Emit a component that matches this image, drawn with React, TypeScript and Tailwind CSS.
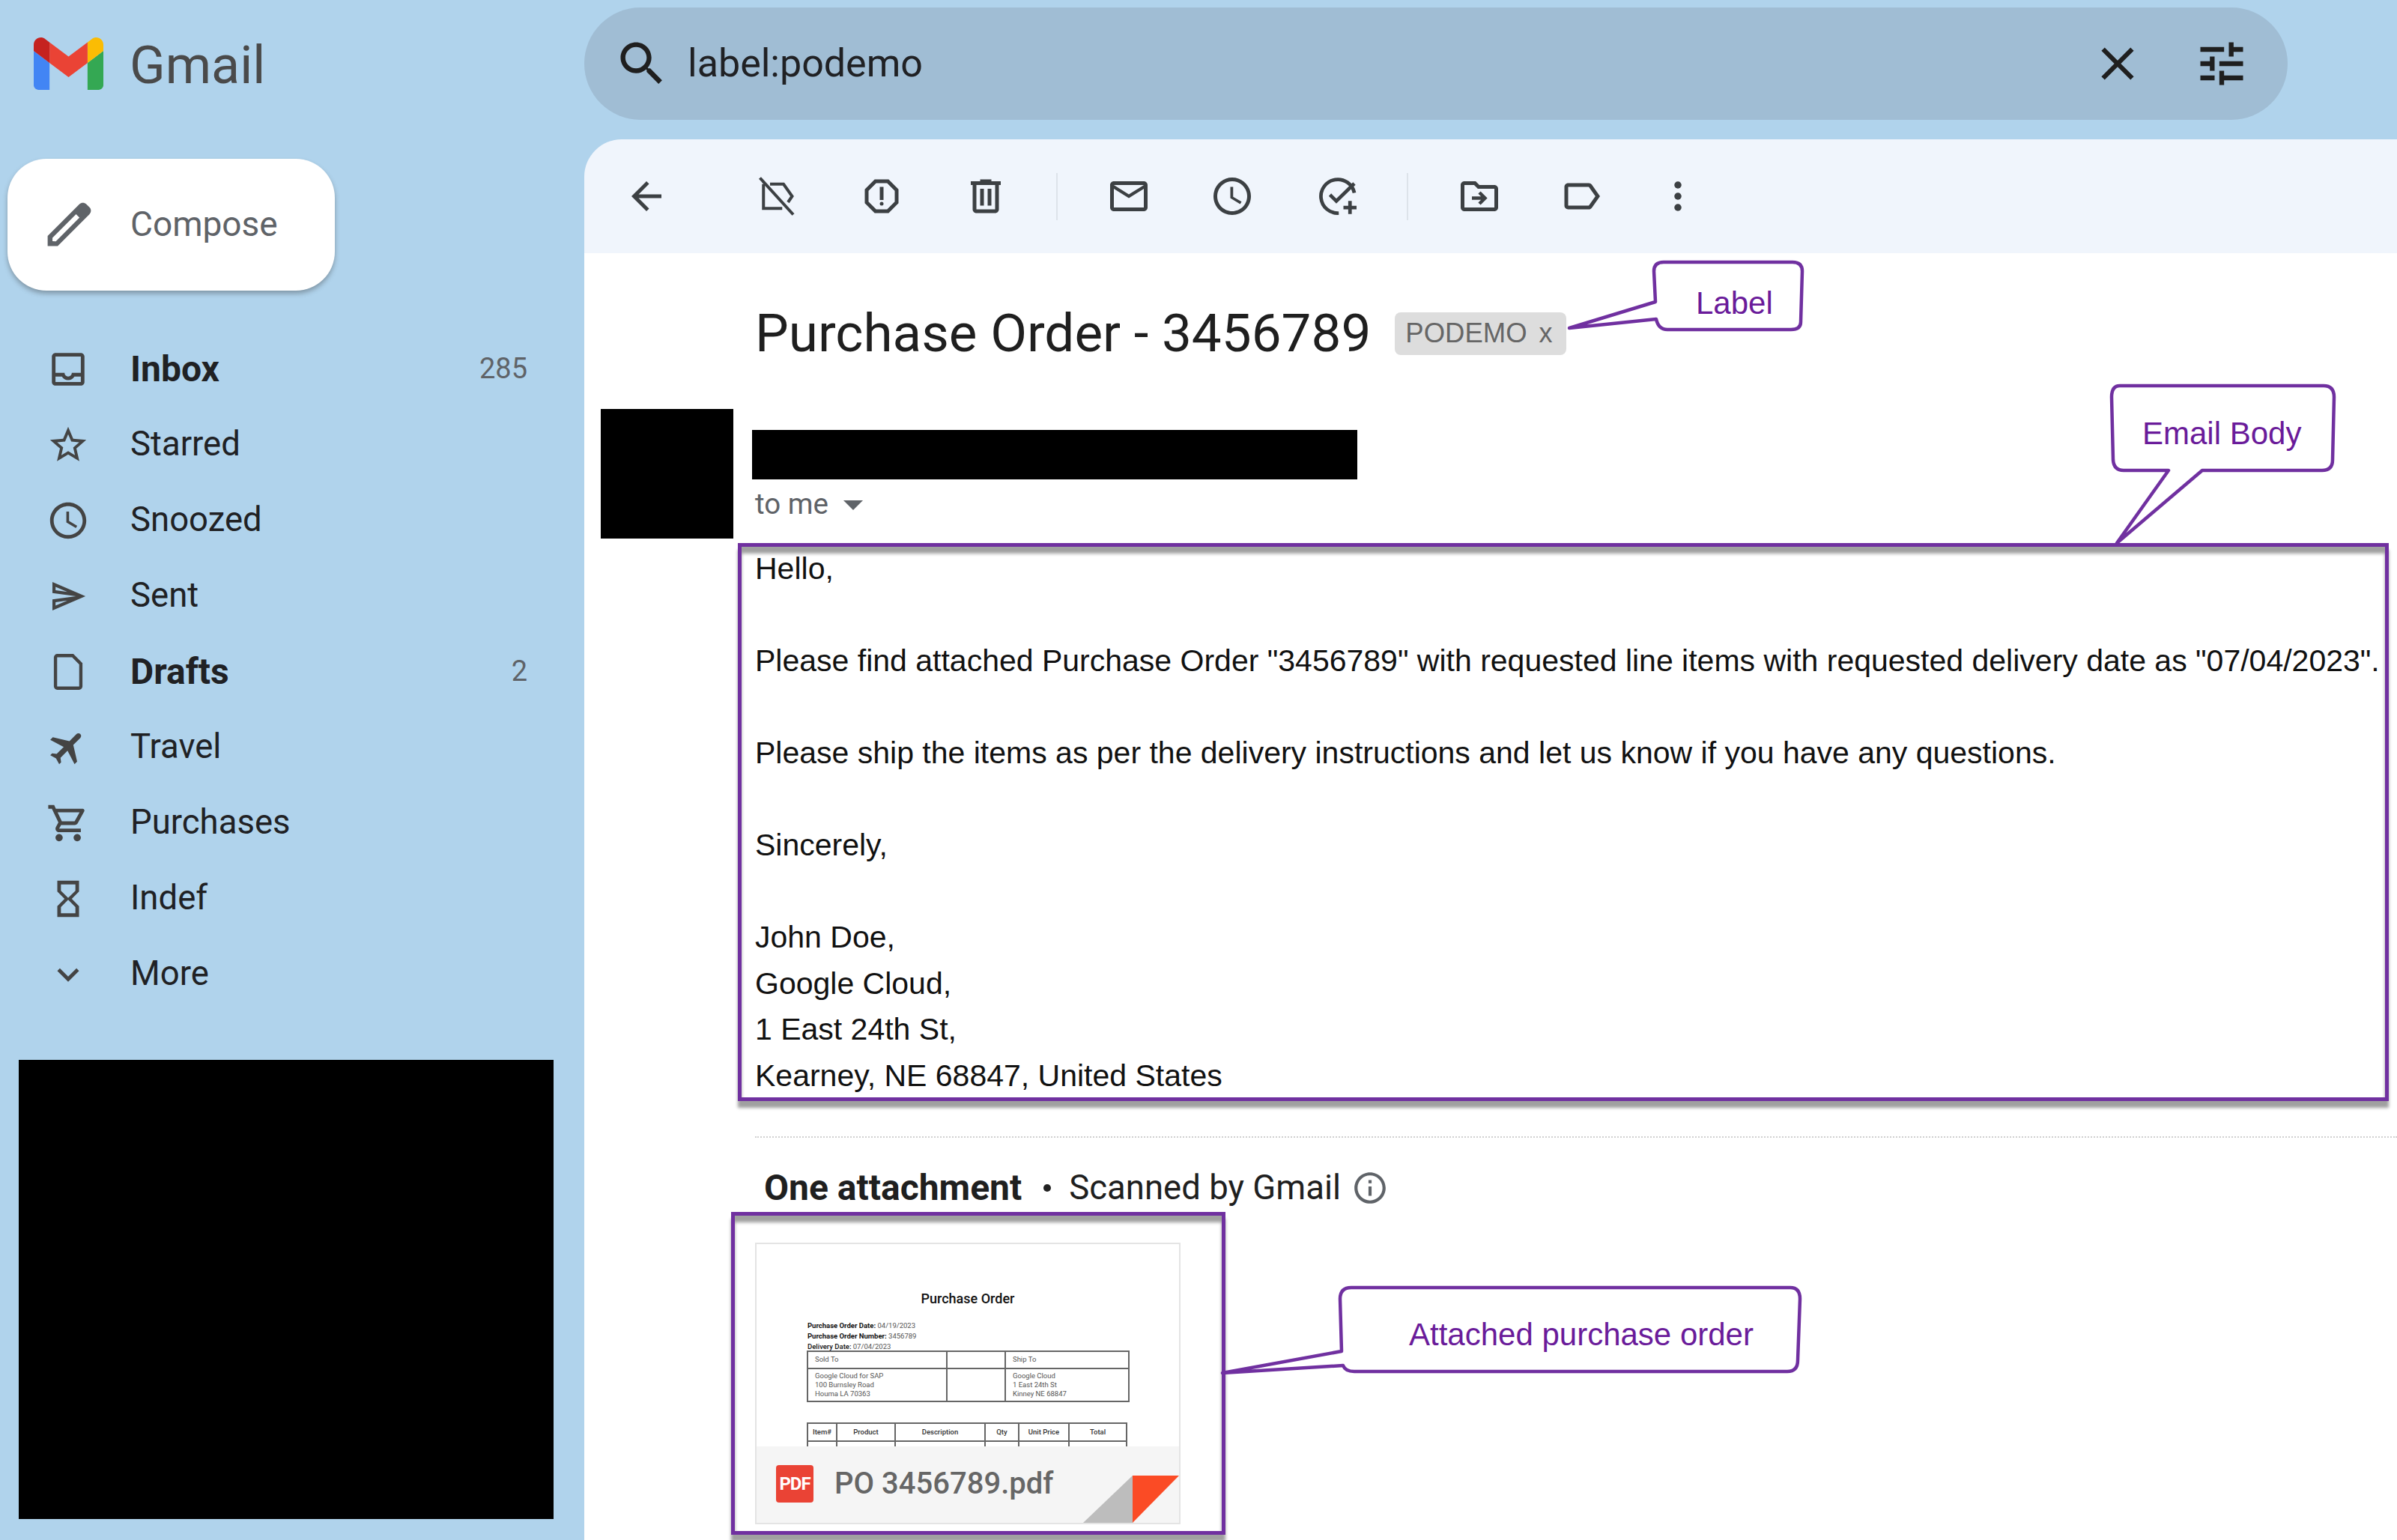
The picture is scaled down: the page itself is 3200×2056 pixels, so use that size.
import type { ReactNode } from "react";

const roboto = "font-['Roboto',sans-serif]";
const arial = "font-['Liberation_Sans',Arial,sans-serif]";

function Icon({ size = 60, className = "", children }: { size?: number; className?: string; children: ReactNode }) {
  return (
    <svg width={size} height={size} viewBox="0 0 24 24" fill="currentColor" className={`shrink-0 ${className}`}>
      {children}
    </svg>
  );
}

const navItems: { label: string; count?: string; bold?: boolean; icon: ReactNode }[] = [
  {
    label: "Inbox",
    count: "285",
    bold: true,
    icon: <path d="M19 3H5c-1.1 0-2 .9-2 2v14c0 1.1.9 2 2 2h14c1.1 0 2-.9 2-2V5c0-1.1-.9-2-2-2zm0 16H5v-3h3.56c.69 1.19 1.97 2 3.44 2s2.75-.81 3.44-2H19v3zm0-5h-4.99c0 1.1-.9 2-2 2s-2-.9-2-2H5V5h14v9z" />,
  },
  {
    label: "Starred",
    icon: <path d="M22 9.24l-7.19-.62L12 2 9.19 8.63 2 9.24l5.46 4.73L5.82 21 12 17.27 18.18 21l-1.63-7.03L22 9.24zM12 15.4l-3.76 2.27 1-4.28-3.32-2.88 4.38-.38L12 6.1l1.71 4.04 4.38.38-3.32 2.88 1 4.28L12 15.4z" />,
  },
  {
    label: "Snoozed",
    icon: (
      <path d="M11.99 2C6.47 2 2 6.48 2 12s4.47 10 9.99 10C17.52 22 22 17.52 22 12S17.52 2 11.99 2zM12 20c-4.42 0-8-3.58-8-8s3.58-8 8-8 8 3.58 8 8-3.58 8-8 8zM12.5 7H11v6l5.25 3.15.75-1.23-4.5-2.67z" />
    ),
  },
  {
    label: "Sent",
    icon: <path transform="translate(12 12) scale(0.87) translate(-12 -12)" d="M4.01 6.03l7.51 3.22-7.52-1 .01-2.22m7.5 8.72L4 17.97v-2.22l7.51-1M2.01 3L2 10l15 2-15 2 .01 7L23 12 2.01 3z" />,
  },
  {
    label: "Drafts",
    count: "2",
    bold: true,
    icon: <path d="M14.5 3H6a1 1 0 0 0-1 1v16a1 1 0 0 0 1 1h12a1 1 0 0 0 1-1V7.5z" fill="none" stroke="currentColor" strokeWidth="1.8" />,
  },
  {
    label: "Travel",
    icon: (
      <path
        transform="rotate(45 12 12)"
        d="M21 16v-2l-8-5V3.5c0-.83-.67-1.5-1.5-1.5S10 2.67 10 3.5V9l-8 5v2l8-2.5V19l-2 1.5V22l3.5-1 3.5 1v-1.5L13 19v-5.5l8 2.5z"
      />
    ),
  },
  {
    label: "Purchases",
    icon: <path d="M15.55 13c.75 0 1.41-.41 1.75-1.03l3.58-6.49c.37-.66-.11-1.48-.87-1.48H5.21l-.94-2H1v2h2l3.6 7.59-1.35 2.44C4.52 15.37 5.48 17 7 17h12v-2H7l1.1-2h7.45zM6.16 6h12.15l-2.76 5H8.53L6.16 6zM7 18c-1.1 0-1.99.9-1.99 2S5.9 22 7 22s2-.9 2-2-.9-2-2-2zm10 0c-1.1 0-1.99.9-1.99 2s.89 2 1.99 2 2-.9 2-2-.9-2-2-2z" />,
  },
  {
    label: "Indef",
    icon: <path d="M6 2v6h.01L6 8.01 10 12l-4 4 .01.01H6V22h12v-5.99h-.01L18 16l-4-4 4-3.99-.01-.01H18V2H6zm10 14.5V20H8v-3.5l4-4 4 4zm-4-5l-4-4V4h8v3.5l-4 4z" />,
  },
  {
    label: "More",
    icon: <path d="M16.59 8.59L12 13.17 7.41 8.59 6 10l6 6 6-6z" />,
  },
];

function Sidebar() {
  return (
    <aside className="w-[780px] shrink-0 flex flex-col">
      <div className="h-[212px] pl-[45px] pt-[50px] flex items-start gap-[35px]">
        <svg width="93" height="70" viewBox="52 42 88 66" className="shrink-0">
          <path fill="#4285f4" d="M58 108h14V74L52 59v43c0 3.32 2.69 6 6 6" />
          <path fill="#34a853" d="M120 108h14c3.32 0 6-2.69 6-6V59l-20 15" />
          <path fill="#fbbc04" d="M120 48v26l20-15v-8c0-7.42-8.47-11.65-14.4-7.2" />
          <path fill="#ea4335" d="M72 74V48l24 18 24-18v26L96 92" />
          <path fill="#c5221f" d="M52 51v8l20 15V48l-5.6-4.2c-5.94-4.45-14.4-.22-14.4 7.2" />
        </svg>
        <span className={`${roboto} text-[70px] leading-[74px] text-[#4a4a4a]`}>Gmail</span>
      </div>

      <button className="ml-[10px] w-[437px] h-[176px] shrink-0 bg-white rounded-[52px] shadow-[0_4px_6px_rgba(60,64,67,0.4)] flex items-center pl-[44px] gap-[43px] pb-[2px]">
        <Icon size={77} className="text-[#5f6368]">
          <path d="M20.41 4.94l-1.35-1.35c-.78-.78-2.05-.78-2.83 0L3 16.82V21h4.18L20.41 7.77c.79-.78.79-2.05 0-2.83zm-14 14.12L5 19v-1.36l9.82-9.82 1.41 1.41-9.82 9.83z" />
        </Icon>
        <span className={`${roboto} text-[46px] text-[#5f6368]`}>Compose</span>
      </button>

      <nav className="mt-[54px] flex flex-col">
        {navItems.map((item) => (
          <div key={item.label} className="h-[101px] flex items-center pl-[62px] pr-[76px] text-[#3c4043]">
            <Icon size={58} className="text-[#444]">
              {item.icon}
            </Icon>
            <span className={`${roboto} ml-[54px] text-[#202124] ${item.bold ? "text-[48px] font-bold" : "text-[45.5px]"}`}>{item.label}</span>
            {item.count && <span className={`${roboto} ml-auto text-[38px] text-[#5f6368]`}>{item.count}</span>}
          </div>
        ))}
      </nav>

      <div className="mt-[64px] ml-[25px] w-[714px] h-[613px] bg-black" />
    </aside>
  );
}

function SearchBar() {
  return (
    <div className="mt-[10px] h-[150px] w-[2274px] shrink-0 rounded-full bg-[#a0bdd4] flex items-center pl-[39px] text-[#1f1f1f]">
      <Icon size={76}>
        <path d="M15.5 14h-.79l-.28-.27C15.41 12.59 16 11.11 16 9.5 16 5.91 13.09 3 9.5 3S3 5.91 3 9.5 5.91 16 9.5 16c1.61 0 3.09-.59 4.23-1.57l.27.28v.79l5 4.99L20.49 19l-4.99-5zm-6 0C7.01 14 5 11.99 5 9.5S7.01 5 9.5 5 14 7.01 14 9.5 11.99 14 9.5 14z" />
      </Icon>
      <span className={`${roboto} ml-[23px] text-[52px] text-[#202124]`}>label:podemo</span>
      <Icon size={74} className="ml-auto">
        <path d="M19 6.41L17.59 5 12 10.59 6.41 5 5 6.41 10.59 12 5 17.59 6.41 19 12 13.41 17.59 19 19 17.59 13.41 12z" />
      </Icon>
      <Icon size={76} className="ml-[64px] mr-[50px]">
        <path d="M3 17v2h6v-2H3zM3 5v2h10V5H3zm10 16v-2h8v-2h-8v-2h-2v6h2zM7 9v2H3v2h4v2h2V9H7zm14 4v-2H11v2h10zm-6-4h2V7h4V5h-4V3h-2v6z" />
      </Icon>
    </div>
  );
}

function Toolbar() {
  return (
    <div className="h-[152px] shrink-0 bg-[#f0f5fc] flex items-center pl-[53px] text-[#3c4043]">
      <Icon>
        <path d="M20 11H7.83l5.59-5.59L12 4l-8 8 8 8 1.41-1.41L7.83 13H20v-2z" />
      </Icon>
      <Icon className="ml-[115px]">
        <path d="M8 5.5h7.2l4.6 6.5-2.2 3.2M14.5 18.5H4.5V5.5" fill="none" stroke="currentColor" strokeWidth="1.6" />
        <path d="M2.6 2.2 20.4 21.8" fill="none" stroke="currentColor" strokeWidth="1.6" />
      </Icon>
      <Icon className="ml-[79px]">
        <path d="M15.73 3H8.27L3 8.27v7.46L8.27 21h7.46L21 15.73V8.27L15.73 3zM19 14.9L14.9 19H9.1L5 14.9V9.1L9.1 5h5.8L19 9.1v5.8z" />
        <circle cx="12" cy="16" r="1" />
        <rect x="11" y="7" width="2" height="7" />
      </Icon>
      <Icon className="ml-[79px]">
        <path d="M15 4V3H9v1H4v2h1v13c0 1.1.9 2 2 2h10c1.1 0 2-.9 2-2V6h1V4h-5zm2 15H7V6h10v13z" />
        <path d="M9 8h2v9H9zm4 0h2v9h-2z" />
      </Icon>
      <div className="ml-[64px] w-[2px] h-[63px] bg-[#dde3ea]" />
      <Icon className="ml-[65px]">
        <path d="M20 4H4c-1.1 0-2 .9-2 2v12c0 1.1.9 2 2 2h16c1.1 0 2-.9 2-2V6c0-1.1-.9-2-2-2zm0 14H4V8l8 5 8-5v10zm-8-7L4 6h16l-8 5z" />
      </Icon>
      <Icon className="ml-[78px]">
        <path d="M11.99 2C6.47 2 2 6.48 2 12s4.47 10 9.99 10C17.52 22 22 17.52 22 12S17.52 2 11.99 2zM12 20c-4.42 0-8-3.58-8-8s3.58-8 8-8 8 3.58 8 8-3.58 8-8 8z" />
        <path d="M12.5 7H11v6l5.25 3.15.75-1.23-4.5-2.67z" />
      </Icon>
      <Icon className="ml-[81px]">
        <path d="M20.8 10.2A9 9 0 1 0 12.5 21" fill="none" stroke="currentColor" strokeWidth="1.9" />
        <path d="M7.8 11.2l3.4 3.4 9.6-9.4" fill="none" stroke="currentColor" strokeWidth="1.9" />
        <path d="M18.5 14.5v7M15 18h7" fill="none" stroke="currentColor" strokeWidth="1.9" />
      </Icon>
      <div className="ml-[62px] w-[2px] h-[63px] bg-[#dde3ea]" />
      <Icon className="ml-[65px]">
        <path d="M20 6h-8l-2-2H4c-1.1 0-2 .9-2 2v12c0 1.1.9 2 2 2h16c1.1 0 2-.9 2-2V8c0-1.1-.9-2-2-2zm0 12H4V6h5.17l2 2H20v10z" />
        <path d="M8 13h6M12 10l3 3-3 3" fill="none" stroke="currentColor" strokeWidth="1.8" />
      </Icon>
      <Icon className="ml-[76px]">
        <path d="M17.63 5.84C17.27 5.33 16.67 5 16 5L5 5.01C3.9 5.01 3 5.9 3 7v10c0 1.1.9 1.99 2 1.99L16 19c.67 0 1.27-.33 1.63-.84L22 12l-4.37-6.16zM16 17H5V7h11l3.55 5L16 17z" />
      </Icon>
      <Icon className="ml-[69px]">
        <circle cx="12" cy="6" r="1.9" />
        <circle cx="12" cy="12" r="1.9" />
        <circle cx="12" cy="18" r="1.9" />
      </Icon>
    </div>
  );
}

function AttachmentThumb() {
  return (
    <div className="relative w-[568px] h-[376px] border-2 border-[#e4e4e4] overflow-hidden bg-white">
      <div className={`${roboto} pt-[62px] text-center text-[18px] leading-[22px] font-medium text-[#111]`}>Purchase Order</div>
      <div className={`${roboto} mt-[18px] ml-[68px] text-[9.5px] leading-[14px] text-[#555]`}>
        <div>
          <b className="text-[#111]">Purchase Order Date:</b> 04/19/2023
        </div>
        <div>
          <b className="text-[#111]">Purchase Order Number:</b> 3456789
        </div>
        <div>
          <b className="font-medium text-[#111]">Delivery Date:</b> 07/04/2023
        </div>
      </div>
      <div className={`${roboto} -mt-[2px] ml-[67px] w-[431px] h-[69px] grid grid-cols-[186px_78px_1fr] grid-rows-[23px_1fr] border-2 border-[#666] text-[9.5px] text-[#555]`}>
        <div className="border-r-2 border-b-2 border-[#666] pl-[9px] pt-[3px]">Sold To</div>
        <div className="border-r-2 border-b-2 border-[#666]" />
        <div className="border-b-2 border-[#666] pl-[9px] pt-[3px]">Ship To</div>
        <div className="border-r-2 border-[#666] pl-[9px] leading-[12px] pt-[3px]">
          Google Cloud for SAP
          <br />
          100 Burnsley Road
          <br />
          Houma LA 70363
        </div>
        <div className="border-r-2 border-[#666]" />
        <div className="pl-[9px] leading-[12px] pt-[3px]">
          Google Cloud
          <br />1 East 24th St
          <br />
          Kinney NE 68847
        </div>
      </div>
      <div className={`${roboto} mt-[27px] ml-[67px] w-[428px] grid grid-cols-[39px_78px_120px_45px_67px_1fr] border-2 border-[#666] text-[9.5px] font-medium text-[#333] text-center`}>
        {["Item#", "Product", "Description", "Qty", "Unit Price", "Total"].map((h, i) => (
          <div key={h} className={`h-[24px] leading-[22px] border-b-2 border-[#666] ${i < 5 ? "border-r-2" : ""}`}>
            {h}
          </div>
        ))}
        {[0, 1, 2, 3, 4, 5].map((i) => (
          <div key={i} className={`h-[30px] border-[#666] ${i < 5 ? "border-r-2" : ""}`} />
        ))}
      </div>

      {/* file name strip */}
      <div className="absolute left-0 right-0 bottom-0 h-[102px] bg-[#f5f5f5]">
        <div className="pl-[26px] pt-[25px] flex items-center gap-[28px]">
          <div className={`${roboto} w-[50px] h-[50px] rounded-[4px] bg-[#ea4335] text-white text-[24px] tracking-[-1px] font-bold flex items-center justify-center`}>PDF</div>
          <span className={`${roboto} text-[40px] leading-[50px] font-medium text-[#666]`}>PO 3456789.pdf</span>
        </div>
        <svg width="128" height="63" viewBox="0 0 128 63" className="absolute right-0 bottom-0">
          <path d="M0 63 66 0V63z" fill="#bdbdbd" />
          <path d="M66 0H128L66 63z" fill="#fb4b25" />
        </svg>
      </div>
    </div>
  );
}

function MailView() {
  const bodyLines = [
    "Hello,",
    "",
    'Please find attached Purchase Order "3456789" with requested line items with requested delivery date as "07/04/2023".',
    "",
    "Please ship the items as per the delivery instructions and let us know if you have any questions.",
    "",
    "Sincerely,",
    "",
    "John Doe,",
    "Google Cloud,",
    "1 East 24th St,",
    "Kearney, NE 68847, United States",
  ];

  return (
    <div className="flex-1 min-h-0 bg-white flex flex-col">
      <div className="mt-[71px] pl-[228px] h-[72px] shrink-0 flex items-center">
        <h1 className={`${roboto} text-[71px] text-[#1f1f1f] whitespace-nowrap`}>Purchase Order - 3456789</h1>
        <span className={`${arial} ml-[32px] h-[57px] w-[229px] shrink-0 rounded-[8px] bg-[#dddddd] text-[36.5px] text-[#666] flex items-center pl-[14px]`}>
          PODEMO<span className="ml-[16px] text-[36px]">x</span>
        </span>
      </div>

      <div className="mt-[65px] flex shrink-0">
        <div className="ml-[22px] w-[177px] h-[173px] bg-black" />
        <div className="ml-[25px] pt-[28px]">
          <div className="w-[808px] h-[66px] bg-black" />
          <div className={`${roboto} mt-[11px] ml-[4px] flex items-center text-[38.5px] leading-[44px] text-[#5f6368]`}>
            to me
            <span className="ml-[20px] mt-[2px] w-0 h-0 border-x-[13px] border-x-transparent border-t-[13px] border-t-[#5f6368]" />
          </div>
        </div>
      </div>

      <div className="ml-[205px] mt-[6px] w-[2204px] h-[745px] shrink-0 border-[5px] border-[#7030a0] shadow-[0_9px_4px_0_#a0a0a0,inset_0_9px_4px_0_#a0a0a0]">
        <div className={`${arial} -mt-[1px] pl-[18px] text-[41px] leading-[61.5px] text-[#111] whitespace-nowrap`}>
          {bodyLines.map((line, i) => (
            <div key={i} className="h-[61.5px]">
              {line}
            </div>
          ))}
        </div>
      </div>

      <div className="mt-[47px] ml-[228px] shrink-0 border-t-2 border-dotted border-[#d0d0d0]" />

      <div className={`${roboto} mt-[34px] ml-[240px] h-[66px] shrink-0 flex items-center text-[45.5px] text-[#1f1f1f]`}>
        <span className="font-bold text-[48px]">One attachment</span>
        <span className="ml-[29px] mr-[24px] w-[10px] h-[10px] rounded-full bg-[#222]" />
        <span>Scanned by Gmail</span>
        <Icon size={50} className="ml-[14px] text-[#5f6368]">
          <path d="M11 7h2v2h-2zm0 4h2v6h-2zm1-9C6.48 2 2 6.48 2 12s4.48 10 10 10 10-4.48 10-10S17.52 2 12 2zm0 18c-4.41 0-8-3.59-8-8s3.59-8 8-8 8 3.59 8 8-3.59 8-8 8z" />
        </Icon>
      </div>

      <div className="ml-[196px] -mt-[1px] w-[660px] h-[431px] shrink-0 border-[5px] border-[#7030a0] pl-[27px] pt-[36px] shadow-[0_9px_4px_0_#a0a0a0,inset_0_9px_4px_0_#a0a0a0]">
        <AttachmentThumb />
      </div>
    </div>
  );
}

// annotation bubbles sit on top of the mail, x/y are page coordinates
function Callout({ x, y, w, h, d, textX, textY, text }: { x: number; y: number; w: number; h: number; d: string; textX: number; textY: number; text: string }) {
  return (
    <div className="absolute" style={{ left: x, top: y, width: w, height: h }}>
      <svg width={w} height={h} viewBox={`0 0 ${w} ${h}`} className="absolute inset-0">
        <path d={d} fill="white" stroke="#7030a0" strokeWidth="4.5" strokeLinejoin="round" />
      </svg>
      <span
        className={`${arial} absolute text-[42px] leading-[48px] text-[#6a1b9a] whitespace-nowrap`}
        style={{ left: textX, top: textY - 24 }}
      >
        {text}
      </span>
    </div>
  );
}

export default function App() {
  return (
    <div className="relative w-[3200px] h-[2056px] overflow-hidden bg-[#b0d3ec] flex">
      <Sidebar />
      <main className="flex-1 min-w-0 flex flex-col">
        <SearchBar />
        <div className="mt-[26px] flex-1 min-h-0 rounded-tl-[50px] overflow-hidden flex flex-col">
          <Toolbar />
          <MailView />
        </div>
      </main>

      <Callout
        x={2090}
        y={346}
        w={324}
        h={100}
        d="M131 4H303Q316 4 316 16L314 84Q314 94 301 94H136Q124 94 121 80L5 92L120 57L118 16Q118 4 131 4Z"
        textX={174}
        textY={59}
        text="Label"
      />
      <Callout
        x={2811}
        y={510}
        w={311}
        h={220}
        d="M19 5H291Q305 5 305 20L303 104Q303 118 289 118H129L15 215L84 118H24Q11 118 10 104L8 20Q8 5 19 5Z"
        textX={49}
        textY={69}
        text="Email Body"
      />
      <Callout
        x={1628}
        y={1714}
        w={782}
        h={124}
        d="M176 5H762Q775 5 775 20L772 102Q772 117 758 117H180Q168 117 165 109L4 119L163 90L161 20Q161 5 176 5Z"
        textX={253}
        textY={68}
        text="Attached purchase order"
      />
    </div>
  );
}
